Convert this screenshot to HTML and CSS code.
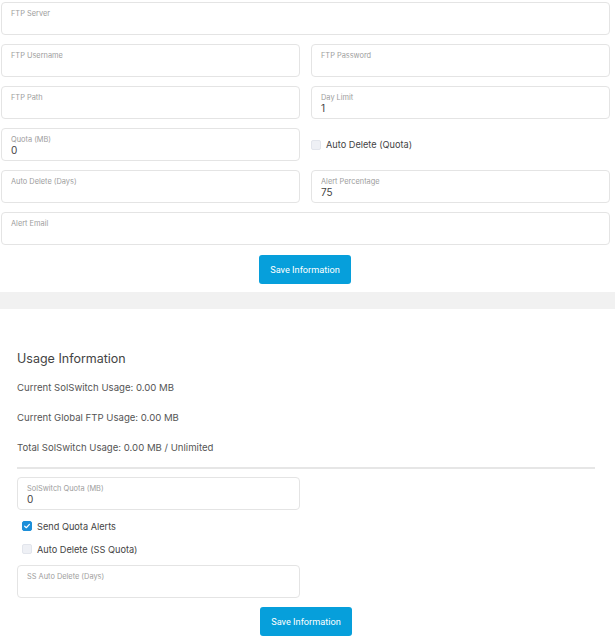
FILE: index.html
```html
<!DOCTYPE html>
<html>
<head>
<meta charset="utf-8">
<link rel="stylesheet" href="styles.css">
</head>
<body>
<section class="ftp">
  <div class="grid">
    <div class="field span2"><div class="lbl">FTP Server</div><div class="val"></div></div>
    <div class="field"><div class="lbl">FTP Username</div><div class="val"></div></div>
    <div class="field"><div class="lbl">FTP Password</div><div class="val"></div></div>
    <div class="field"><div class="lbl">FTP Path</div><div class="val"></div></div>
    <div class="field"><div class="lbl">Day Limit</div><div class="val">1</div></div>
    <div class="field"><div class="lbl">Quota (MB)</div><div class="val">0</div></div>
    <label class="check"><span class="box"></span><span>Auto Delete (Quota)</span></label>
    <div class="field"><div class="lbl">Auto Delete (Days)</div><div class="val"></div></div>
    <div class="field"><div class="lbl">Alert Percentage</div><div class="val">75</div></div>
    <div class="field span2"><div class="lbl">Alert Email</div><div class="val"></div></div>
  </div>
  <div class="actions"><button class="btn">Save Information</button></div>
</section>
<div class="band"></div>
<section class="usage">
  <h3 class="title">Usage Information</h3>
  <p class="stat">Current SolSwitch Usage: 0.00 MB</p>
  <p class="stat">Current Global FTP Usage: 0.00 MB</p>
  <p class="stat">Total SolSwitch Usage: 0.00 MB / Unlimited</p>
  <hr class="rule">
  <div class="grid">
    <div class="field"><div class="lbl">SolSwitch Quota (MB)</div><div class="val">0</div></div>
  </div>
  <label class="check row"><span class="box on"><svg viewBox="0 0 12 12" width="8" height="8"><path d="M2.5 6.3 L5 8.6 L9.6 3.6" fill="none" stroke="#fff" stroke-width="1.8" stroke-linecap="round" stroke-linejoin="round"/></svg></span><span>Send Quota Alerts</span></label>
  <label class="check row"><span class="box"></span><span>Auto Delete (SS Quota)</span></label>
  <div class="grid g2">
    <div class="field"><div class="lbl">SS Auto Delete (Days)</div><div class="val"></div></div>
  </div>
  <div class="actions a2"><button class="btn">Save Information</button></div>
</section>
</body>
</html>
```
FILE: styles.css
```css
* { box-sizing: border-box; }
body {
  margin: 0;
  font-family: Inter, "Noto Sans", sans-serif;
  color: #444;
  background: #fff;
}
.ftp {
  width: 611px;
  padding: 2px 0 0 1px;
}
.grid {
  display: grid;
  grid-template-columns: 299px 299px;
  column-gap: 11px;
  row-gap: 9px;
}
.span2 { grid-column: 1 / span 2; }
.field {
  height: 33px;
  border: 1px solid #e4e4e4;
  border-radius: 4px;
  padding: 6px 9px 0;
}
.lbl {
  font-size: 7.4px;
  line-height: 9px;
  color: #9d9d9d;
}
.val {
  font-size: 10px;
  line-height: 12px;
  color: #444;
}
.check {
  display: flex;
  align-items: center;
  gap: 5px;
  font-size: 9.2px;
  color: #444;
}
.box {
  width: 10px;
  height: 10px;
  border-radius: 2px;
  background: #eef0f5;
  border: 1px solid #e2e5ec;
  display: flex;
  align-items: center;
  justify-content: center;
}
.box.on {
  background: #1d8fd9;
  border-color: #1d8fd9;
}
.actions {
  display: flex;
  justify-content: center;
  margin-top: 10px;
  padding-right: 2px;
}
.btn {
  width: 92px;
  height: 29px;
  border: 0;
  border-radius: 3px;
  background: #069fdb;
  color: #fff;
  font-family: Roboto, "Liberation Sans", sans-serif;
  font-size: 9.2px;
  padding: 0;
}
.band {
  margin-top: 8px;
  height: 17px;
  background: #f1f1f1;
}
.usage {
  padding: 0 20px 0 17px;
}
.title {
  margin: 42px 0 0;
  font-size: 12.5px;
  line-height: 15px;
  font-weight: 400;
  color: #444;
}
.stat {
  margin: 0;
  font-size: 9.6px;
  line-height: 12px;
  color: #555;
}
.title + .stat { margin-top: 16px; }
.stat + .stat { margin-top: 18px; }
.rule {
  margin: 13px 0 8px;
  border: 0;
  height: 2px;
  background: #e6e6e6;
}
.usage .grid { grid-template-columns: 283px 283px; }
.row { margin-top: 10px; height: 12px; padding-left: 5px; }
.row + .row { margin-top: 11px; }
.g2 { margin-top: 10px; }
.a2 { margin-top: 9px; padding-right: 0; justify-content: flex-start; padding-left: 243px; }
```
